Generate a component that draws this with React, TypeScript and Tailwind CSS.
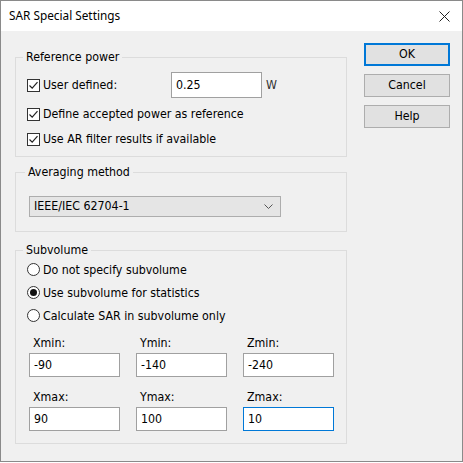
import React from "react";

const font = { fontFamily: '"DejaVu Sans Condensed", "DejaVu Sans", Tahoma, sans-serif' };

function Check({ label }: { label: string }) {
  return (
    <div className="flex items-center h-full">
      <span className="w-[13px] h-[13px] border border-[#333333] bg-white flex items-center justify-center">
        <svg width="11" height="11" viewBox="0 0 11 11">
          <path d="M1.5 5.5 L4.2 8.2 L9.5 2.2" fill="none" stroke="#222" strokeWidth="1.2" />
        </svg>
      </span>
      <span className="ml-[3px] text-[12.3px] leading-[14px] text-black">{label}</span>
    </div>
  );
}

function Radio({ label, on }: { label: string; on?: boolean }) {
  return (
    <div className="flex items-center h-[23px]">
      <span className="w-[13px] h-[13px] rounded-full border border-[#333333] bg-white flex items-center justify-center">
        {on && <span className="w-[7px] h-[7px] rounded-full bg-[#111]" />}
      </span>
      <span className="ml-[3px] text-[12.3px] leading-[14px] text-black">{label}</span>
    </div>
  );
}

function Field({ label, value, focus }: { label: string; value: string; focus?: boolean }) {
  return (
    <div className="flex flex-col">
      <span className="pl-[4px] text-[12.3px] leading-[14px] text-black">{label}</span>
      <div
        className={
          "mt-[3px] h-[24px] w-[91px] bg-white border flex items-center pl-[4px] text-[12.3px] text-black " +
          (focus ? "border-[#0078d7]" : "border-[#a0a0a0]")
        }
      >
        {value}
      </div>
    </div>
  );
}

function Group({ title, children, className }: { title: string; children: React.ReactNode; className?: string }) {
  return (
    <fieldset className={"border border-[#dcdcdc] pl-[11px] " + (className ?? "")}>
      <legend className="ml-[-4px] px-[3px] text-[12.3px] leading-[16px] text-black">{title}</legend>
      {children}
    </fieldset>
  );
}

function Btn({ label, primary }: { label: string; primary?: boolean }) {
  return (
    <button
      className={
        "w-[86px] h-[23px] bg-[#e1e1e1] text-[12.3px] text-black flex items-center justify-center " +
        (primary ? "border-2 border-[#0078d7]" : "border border-[#adadad]")
      }
    >
      {label}
    </button>
  );
}

export default function App() {
  return (
    <div className="w-[463px] h-[463px] bg-white">
      <div className="w-[463px] h-[462px] border border-[#8a8a8a] flex flex-col" style={font}>
        <div className="h-[30px] bg-white flex items-center justify-between pl-[8px] pr-[12px]">
          <span className="text-[11.8px] text-black" style={{ fontFamily: '"Noto Sans", "Open Sans", sans-serif' }}>
            SAR Special Settings
          </span>
          <svg width="11" height="11" viewBox="0 0 11 11">
            <path d="M0.5 0.5 L10.5 10.5 M10.5 0.5 L0.5 10.5" stroke="#222" strokeWidth="1" />
          </svg>
        </div>
        <div className="flex-1 bg-[#f0f0f0] flex pl-[14px]">
          <div className="w-[332px] pt-[18px] flex flex-col">
            <Group title="Reference power" className="h-[108px] pr-[8px]">
              <div className="mt-[7px] h-[26px] flex items-center">
                <div className="w-[144px] h-full">
                  <Check label="User defined:" />
                </div>
                <div className="h-[26px] w-[91px] bg-white border border-[#a0a0a0] flex items-center pl-[4px] text-[12.3px] text-black">
                  0.25
                </div>
                <span className="ml-[4px] text-[12.3px] text-[#333]">W</span>
              </div>
              <div className="mt-[6px] h-[20px]">
                <Check label="Define accepted power as reference" />
              </div>
              <div className="mt-[5px] h-[20px]">
                <Check label="Use AR filter results if available" />
              </div>
            </Group>
            <Group title="Averaging method" className="mt-[7px] h-[68px] pl-[13px]">
              <div className="mt-[16px] h-[21px] w-[252px] bg-[#e5e5e5] border border-[#adadad] flex items-center justify-between pl-[4px] pr-[7px] text-[12.3px] text-black">
                <span>IEEE/IEC 62704-1</span>
                <svg width="9" height="6" viewBox="0 0 9 6">
                  <path d="M0.5 0.5 L4.5 4.5 L8.5 0.5" fill="none" stroke="#555" strokeWidth="1" />
                </svg>
              </div>
            </Group>
            <Group title="Subvolume" className="mt-[10px] h-[202px] pl-[11px]">
              <Radio label="Do not specify subvolume" />
              <Radio label="Use subvolume for statistics" on />
              <Radio label="Calculate SAR in subvolume only" />
              <div className="mt-[9px] ml-[2px] grid grid-cols-[91px_91px_91px] gap-x-[16px] gap-y-[13px]">
                <Field label="Xmin:" value="-90" />
                <Field label="Ymin:" value="-140" />
                <Field label="Zmin:" value="-240" />
                <Field label="Xmax:" value="90" />
                <Field label="Ymax:" value="100" />
                <Field label="Zmax:" value="10" focus />
              </div>
            </Group>
          </div>
          <div className="ml-[17px] pt-[12px] flex flex-col gap-[8px]">
            <Btn label="OK" primary />
            <Btn label="Cancel" />
            <Btn label="Help" />
          </div>
        </div>
      </div>
    </div>
  );
}
